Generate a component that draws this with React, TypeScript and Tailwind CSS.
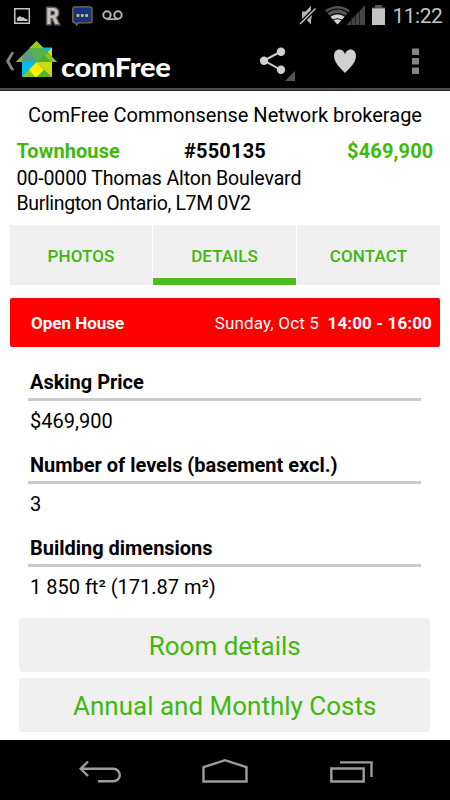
import React from "react";

type IconProps = {
  x: number;
  y: number;
  w: number;
  h: number;
  className?: string;
  children: React.ReactNode;
};

// Icon drawn in screen units, so that the viewBox origin is its place on the screen.
function Icon({ x, y, w, h, className = "", children }: IconProps) {
  return (
    <svg width={w} height={h} viewBox={`${x} ${y} ${w} ${h}`} className={`shrink-0 ${className}`} fill="none">
      {children}
    </svg>
  );
}

function StatusBar() {
  return (
    <div className="flex h-[30px] items-start bg-black">
      <Icon x={14} y={0} w={16} h={30} className="ml-[14px]">
        <rect x="14.75" y="8.75" width="14.5" height="14.5" stroke="#c4c4c4" strokeWidth="1.5" />
        <path d="M17 21v-3l3-2 2 1.5 1-.5 2 1.5 2.500 1V21z" fill="#c4c4c4" />
      </Icon>
      <Icon x={44} y={0} w={18} h={30} className="ml-[14px]">
        <text x="46" y="23.500" fontSize="22" fontWeight="700" fontFamily="Roboto, sans-serif" textLength="13" lengthAdjust="spacingAndGlyphs" fill="#c4c4c4" stroke="#5e5e5e" strokeWidth="3" paintOrder="stroke">R</text>
      </Icon>
      <Icon x={72} y={0} w={21} h={30} className="ml-[10px]">
        <path d="M74.500 6.800h15.500q2 0 2 2v12q0 2-2 2H78.500l-2 2.200-.7-2.200h-1.300q-1.700 0-1.700-2v-12q0-2 1.700-2z" fill="#143383" stroke="#8a6a42" strokeWidth="1.300" />
        <g fill="#d8b45c">
          <rect x="76.500" y="14" width="3" height="3" rx="1" />
          <rect x="80.800" y="14" width="3" height="3" rx="1" />
          <rect x="85.100" y="14" width="3" height="3" rx="1" />
        </g>
      </Icon>
      <Icon x={102} y={0} w={22} h={30} className="ml-[9px]">
        <circle cx="107" cy="15" r="3.700" stroke="#b4b4b4" strokeWidth="2" />
        <circle cx="118" cy="15" r="3.700" stroke="#b4b4b4" strokeWidth="2" />
        <path d="M107 19.200h11" stroke="#b4b4b4" strokeWidth="1.800" />
      </Icon>
      <Icon x={299} y={0} w={18} h={30} className="ml-[175px]">
        <path d="M302 11.500h3.500L311 5.800v18.700l-5.500-5.700H302z" fill="#b4b4b4" />
        <path d="M309.500 9.500q3 5.500 0 11" stroke="#b4b4b4" strokeWidth="2" />
        <path d="M299.500 24.500L315.500 8.500" stroke="#000" strokeWidth="4" />
        <path d="M300 24L315.500 8.500" stroke="#c4c4c4" strokeWidth="1.500" />
      </Icon>
      <Icon x={325} y={0} w={40} h={30} className="ml-[8px]">
        <path d="M337.500 24.500L325 10.500q12.500-9 25 0z" fill="#555" />
        <path d="M337.500 24.500L330.500 16.700q7-4.500 14 0z" fill="#d2d2d2" />
        <path d="M326.500 13q11-8 22 0M329.300 16.400q8.200-5.800 16.400 0M333 20.300q4.500-3 9 0" stroke="#000" strokeWidth="1.100" />
        <path d="M365 5v20h-18.500z" fill="#454545" />
        <path d="M351.500 17v8M355.500 14v11M359.500 10v15" stroke="#181818" strokeWidth=".8" />
      </Icon>
      <Icon x={371} y={0} w={15} h={30} className="ml-[6px]">
        <path d="M375 5h7v2.500h3V10h-13V7.500h3z" fill="#555" />
        <path d="M372 8.500h13V25h-13z" fill="#c4c4c4" />
      </Icon>
      <span className="ml-[6.500px] mt-[3px] text-[21px] leading-[27px] tracking-[-0.500px] text-[#c4c4c4]">11:22</span>
    </div>
  );
}

function ActionBar() {
  return (
    <header className="flex h-[60px] items-start border-b-[2px] border-[#4a484a] bg-black">
      <Icon x={4} y={30} w={53} h={58} className="ml-[4px]">
        <path d="M11.500 52.500h2.300L9 61.200l4.800 8.800h-2.300L6.300 61.200z" fill="#858585" stroke="#858585" strokeWidth=".8" />
        <path d="M22 62h30v15H22z" fill="#55b748" />
        <path d="M42 47.500h10V57z" fill="#00b9f2" />
        <path d="M52 47.500v10l-5-5z" fill="#d8e000" />
        <path d="M22 62h14L22 77z" fill="#00bdf2" />
        <path d="M36.500 62L52 77V62z" fill="#c9dc12" />
        <path d="M22 77l14.500-14.500L51 77z" fill="#8cc81e" />
        <path d="M36.500 62.500l7.500 7.500-7.500 7h-1L29 70z" fill="#fff200" />
        <path d="M44 70l7.500 7H37z" fill="#55b72c" />
        <path d="M36.500 41L57 62H16z" fill="#58b14c" />
        <path d="M36.500 41l7 7h-14z" fill="#94cb10" />
        <path d="M22.500 55.500L36 62H16z" fill="#8bbf2e" />
        <path d="M22.500 55.500L29.500 49l7 13H22z" fill="#569e86" />
        <path d="M44 54.500L51.500 62H37z" fill="#49ae2d" />
        <path d="M50 55l7 7h-5.500L44 54.500z" fill="#8cc81e" />
      </Icon>
      <span className="ml-[4px] mt-[21px] origin-left scale-x-[1.075] font-[Lato] text-[27px] font-black leading-[32px] tracking-[-0.300px] text-white">comFree</span>
      <div className="grow" />
      <Icon x={259} y={30} w={37} h={58}>
        <path d="M281 51.500L264 60.500l17 9.500" stroke="#d0d0d0" strokeWidth="2" />
        <circle cx="281" cy="51.700" r="4.200" fill="#d0d0d0" />
        <circle cx="264" cy="60.700" r="4.200" fill="#d0d0d0" />
        <circle cx="281" cy="69.700" r="4.200" fill="#d0d0d0" />
        <path d="M295 71v10h-10z" fill="#555" />
      </Icon>
      <Icon x={333} y={30} w={24} h={58} className="ml-[37px]">
        <path d="M345 73C341 68.500 334 63 334 56c0-8 9-8.500 11-1.800 2-6.700 11-6.200 11 1.800 0 7-7 12.500-11 17z" fill="#d0d0d0" />
      </Icon>
      <Icon x={411} y={30} w={9} h={58} className="ml-[54px] mr-[30px]">
        <path d="M412 48.500h7V55h-7zM412 58h7v6.500h-7zM412 67.500h7V74h-7z" fill="#858585" />
      </Icon>
    </header>
  );
}

function Field({ label, value }: { label: string; value: string }) {
  return (
    <div className="h-[83px]">
      <div className="h-[33px] border-b-[3px] border-[#cbcbcb] pl-[2px] text-[20px] font-bold leading-[29px] tracking-[-0.020px]">{label}</div>
      <div className="pl-[2px] pt-[7px] text-[20px] leading-[26px]">{value}</div>
    </div>
  );
}

export default function App() {
  return (
    <div className="flex h-[800px] w-[450px] flex-col overflow-hidden whitespace-nowrap bg-white font-[Roboto,sans-serif] text-black">
      <StatusBar />
      <ActionBar />
      <main className="flex h-[650px] flex-col border-t border-[#262426]">
        <h1 className="mt-[12px] text-center text-[20px] leading-[25px]">
          <span>ComFree Commonsense Network brokerage</span>
        </h1>
        <div className="mt-[11px] grid grid-cols-3 px-[16.500px] text-[20px] font-bold leading-[25px]">
          <span className="tracking-[0.080px] text-[#41b80c]">Townhouse</span>
          <span className="text-center tracking-[0.200px]">#550135</span>
          <span className="text-right tracking-[0.150px] text-[#41b80c]">$469,900</span>
        </div>
        <address className="mt-[2px] pl-[16.500px] text-[19.500px] not-italic leading-[25px]">
          <div><span className="tracking-[-0.120px]">00-0000 Thomas Alton Boulevard</span></div>
          <div><span className="tracking-[-0.350px]">Burlington Ontario, L7M 0V2</span></div>
        </address>
        <nav className="mx-[10px] mt-[9px] flex h-[60px] gap-px text-center text-[17px] font-medium leading-[62px] tracking-[0.100px] text-[#41b80c]">
          <span className="h-[60px] w-[142px] bg-[#f0f0f0]">PHOTOS</span>
          <span className="h-[60px] w-[143px] border-b-[7px] border-[#4fbd20] bg-[#f0f0f0]">DETAILS</span>
          <span className="h-[60px] grow bg-[#f0f0f0]">CONTACT</span>
        </nav>
        <div className="mx-[10px] mt-[12.500px] flex h-[49.500px] items-center rounded-[2px] bg-[#ff0000] pl-[21px] pr-[8px] pt-[2px] text-[17px] leading-[25px] text-white">
          <span className="grow font-bold">Open House</span>
          <span className="tracking-[0.170px]">Sunday, Oct 5</span>
          <span className="ml-[8.500px] font-bold tracking-[0.130px]">14:00 - 16:00</span>
        </div>
        <section className="ml-[28px] mr-[29px] mt-[21px]">
          <Field label="Asking Price" value="$469,900" />
          <Field label="Number of levels (basement excl.)" value="3" />
          <Field label="Building dimensions" value="1 850 ft² (171.87 m²)" />
        </section>
        <div className="ml-[19.250px] mr-[19.750px] mt-[1px] flex flex-col gap-[6px] text-center text-[26px] leading-[56px] text-[#41b80c]">
          <button className="h-[54px] rounded-[4px] bg-[#f0f0f0]">Room details</button>
          <button className="h-[54px] rounded-[4px] bg-[#f0f0f0]">Annual and Monthly Costs</button>
        </div>
      </main>
      <footer className="flex h-[60px] shrink-0 items-start bg-black">
        <Icon x={78} y={740} w={44} h={60} className="ml-[78px]">
          <path d="M88 761.500l-7.300 7.300 7.300 7.200M81 768.700h32.500a6.300 6.300 0 010 12.600H98" stroke="#9c9c9c" strokeWidth="2.400" />
        </Icon>
        <Icon x={201} y={740} w={48} h={60} className="ml-[79px]">
          <path d="M203.500 781.500v-14.300l21.500-7 21.500 7v14.300z" stroke="#9c9c9c" strokeWidth="2.400" />
        </Icon>
        <Icon x={329} y={740} w={45} h={60} className="ml-[80px]">
          <path d="M331.300 768.500h32.400v13h-32.400zM340 762.400h31.500V777" stroke="#9c9c9c" strokeWidth="2.400" />
        </Icon>
      </footer>
    </div>
  );
}
